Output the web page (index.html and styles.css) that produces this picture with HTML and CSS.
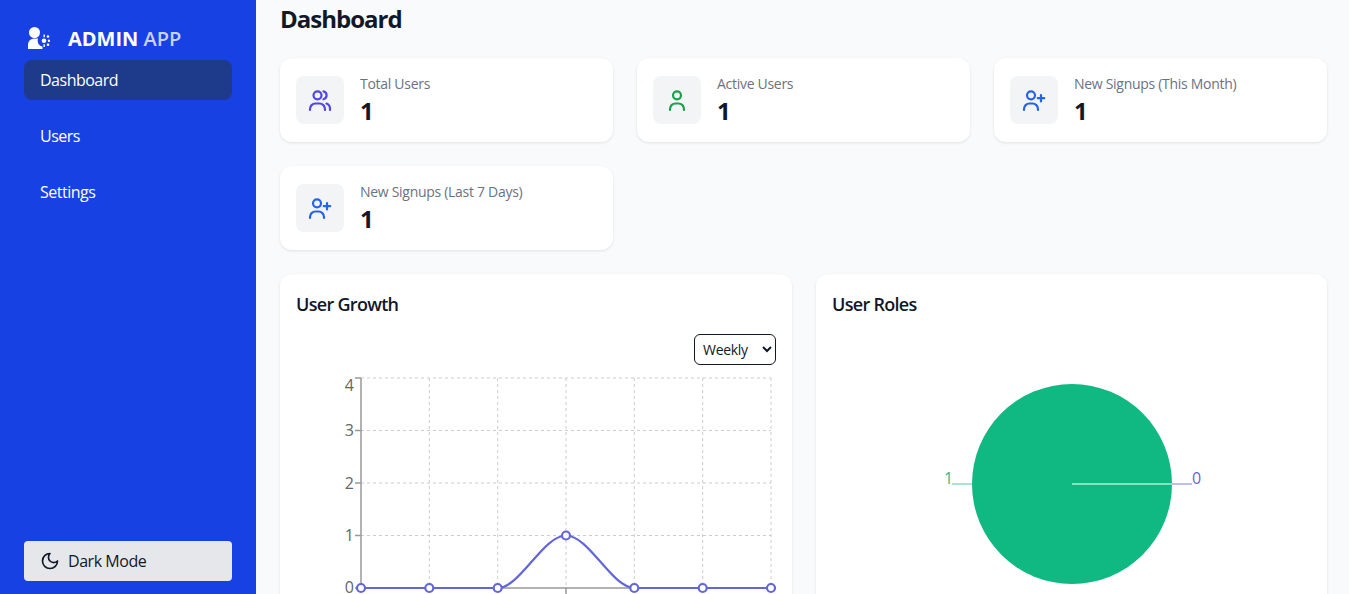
FILE: index.html
```html
<!DOCTYPE html>
<html lang="en">
<head>
  <meta charset="UTF-8">
  <title>Admin App</title>
  <link rel="stylesheet" href="styles.css">
</head>
<body>
  <div class="layout">
    <aside class="sidebar">
      <div>
        <div class="brand">
          <svg class="brand-icon" viewBox="0 0 22 22" fill="#fff">
            <circle cx="6.500" cy="5.500" r="5.500"/>
            <path d="M0 22v-4.500a6 6 0 0 1 6-6h4a6 6 0 0 0 .5 5.500 5 5 0 0 0 4 2.500v2.500z"/>
            <path d="M15.500 7.500h1.400v2.800h-1.400zM15.500 17.300h1.400v2.800h-1.400z"/>
            <circle cx="20" cy="9.500" r="1.300"/><circle cx="21" cy="13.700" r="1.200"/>
            <circle cx="20" cy="17.800" r="1.300"/><circle cx="16" cy="13.700" r="2.300"/>
          </svg>
          <span class="brand-name">ADMIN <span class="brand-light">APP</span></span>
        </div>
        <nav class="nav">
          <a class="nav-item active">Dashboard</a>
          <a class="nav-item">Users</a>
          <a class="nav-item">Settings</a>
        </nav>
      </div>
      <button class="mode-btn">
        <svg class="moon" viewBox="0 0 24 24" fill="none" stroke="#111827" stroke-width="2" stroke-linecap="round" stroke-linejoin="round"><path d="M12 3a6 6 0 0 0 9 9 9 9 0 1 1-9-9Z"/></svg>
        Dark Mode
      </button>
    </aside>

    <main class="main">
      <h1 class="page-title">Dashboard</h1>

      <section class="stats">
        <div class="stat-card">
          <div class="stat-icon">
            <svg viewBox="0 0 24 24" fill="none" stroke="#4f46e5" stroke-width="2.200" stroke-linecap="round" stroke-linejoin="round">
              <circle cx="9.500" cy="7.300" r="4"/>
              <path d="M2 22v-1a5.500 5.500 0 0 1 5.500-5.500h4a5.500 5.500 0 0 1 5.500 5.500v1"/>
              <path d="M15.500 3.400a4 4 0 0 1 0 7.800"/>
              <path d="M18.500 15.600a5.500 5.500 0 0 1 3.500 5.200v1.200"/>
            </svg>
          </div>
          <div>
            <div class="stat-label">Total Users</div>
            <div class="stat-value">1</div>
          </div>
        </div>
        <div class="stat-card">
          <div class="stat-icon">
            <svg viewBox="0 0 24 24" fill="none" stroke="#16a34a" stroke-width="2.200" stroke-linecap="round" stroke-linejoin="round">
              <circle cx="12" cy="7.300" r="4"/>
              <path d="M5 22v-1a5.500 5.500 0 0 1 5.500-5.500h3a5.500 5.500 0 0 1 5.500 5.500v1"/>
            </svg>
          </div>
          <div>
            <div class="stat-label">Active Users</div>
            <div class="stat-value">1</div>
          </div>
        </div>
        <div class="stat-card">
          <div class="stat-icon">
            <svg viewBox="0 0 24 24" fill="none" stroke="#2563eb" stroke-width="2.200" stroke-linecap="round" stroke-linejoin="round">
              <circle cx="9" cy="7.300" r="4"/>
              <path d="M2 22v-1a5.500 5.500 0 0 1 5.500-5.500h3a5.500 5.500 0 0 1 5.500 5.500v1"/>
              <path d="M19 7v6.500M15.800 10.200h6.400"/>
            </svg>
          </div>
          <div>
            <div class="stat-label">New Signups (This Month)</div>
            <div class="stat-value">1</div>
          </div>
        </div>
        <div class="stat-card">
          <div class="stat-icon">
            <svg viewBox="0 0 24 24" fill="none" stroke="#2563eb" stroke-width="2.200" stroke-linecap="round" stroke-linejoin="round">
              <circle cx="9" cy="7.300" r="4"/>
              <path d="M2 22v-1a5.500 5.500 0 0 1 5.500-5.500h3a5.500 5.500 0 0 1 5.500 5.500v1"/>
              <path d="M19 7v6.500M15.800 10.200h6.400"/>
            </svg>
          </div>
          <div>
            <div class="stat-label">New Signups (Last 7 Days)</div>
            <div class="stat-value">1</div>
          </div>
        </div>
      </section>

      <section class="charts">
        <div class="chart-card">
          <h2 class="chart-title">User Growth</h2>
          <div class="chart-controls">
            <select class="range-select">
              <option>Weekly</option>
              <option>Monthly</option>
            </select>
          </div>
          <svg class="chart" width="480" height="229" viewBox="0 0 480 229">
            <g class="grid">
              <path d="M65 13H475M65 65.500H475M65 118H475M65 170.500H475"/>
              <path d="M133.300 13V223M201.700 13V223M270 13V223M338.300 13V223M406.700 13V223M475 13V223"/>
            </g>
            <g class="axis">
              <path d="M65 13V223H475"/>
              <path d="M59 13H65M59 65.500H65M59 118H65M59 170.500H65M59 223H65M270 223V229"/>
            </g>
            <g class="tick-text">
              <text x="58" y="228" text-anchor="end">0</text>
              <text x="58" y="175.500" text-anchor="end">1</text>
              <text x="58" y="123.500" text-anchor="end">2</text>
              <text x="58" y="70.500" text-anchor="end">3</text>
              <text x="58" y="26" text-anchor="end">4</text>
            </g>
            <path class="line" d="M65 223H201.700C224 223 247 170.500 270 170.500C293 170.500 316 223 338.300 223H475"/>
            <g class="dots">
              <circle cx="65" cy="223" r="4"/>
              <circle cx="133.300" cy="223" r="4"/>
              <circle cx="201.700" cy="223" r="4"/>
              <circle cx="270" cy="170.500" r="4"/>
              <circle cx="338.300" cy="223" r="4"/>
              <circle cx="406.700" cy="223" r="4"/>
              <circle cx="475" cy="223" r="4"/>
            </g>
          </svg>
        </div>
        <div class="chart-card">
          <h2 class="chart-title">User Roles</h2>
          <svg class="chart pie-chart" width="479" height="229" viewBox="0 0 479 229">
            <circle cx="240" cy="119" r="100" fill="#10b981"/>
            <path d="M240 119H340" stroke="#a7f3d0" stroke-width="1.500"/>
            <path d="M120 119H140" stroke="#8fd9c0" stroke-width="1.500"/>
            <path d="M340 119H360" stroke="#a9a8e6" stroke-width="1.500"/>
            <text class="pie-label green" x="112" y="119">1</text>
            <text class="pie-label purple" x="360" y="119">0</text>
          </svg>
        </div>
      </section>
    </main>
  </div>
</body>
</html>
```

FILE: styles.css
```css
* {
  box-sizing: border-box;
}
html, body {
  height: 100%;
  margin: 0;
  overflow: hidden;
}
body {
  font-family: "Open Sans", "Noto Sans", sans-serif;
  background-color: #f9fafb;
  color: #111827;
}
.layout {
  display: flex;
  height: 100%;
}

/* sidebar */
.sidebar {
  width: 256px;
  flex-shrink: 0;
  display: flex;
  flex-direction: column;
  justify-content: space-between;
  padding: 23px 24px 13px;
  background-color: #1741e3;
  color: #fff;
}
.brand {
  display: flex;
  align-items: center;
  gap: 18px;
  height: 30px;
  margin: 0 0 7px 4px;
}
.brand-icon {
  width: 22px;
  height: 22px;
}
.brand-name {
  font-size: 20px;
  font-weight: 700;
}
.brand-light {
  color: #c7d2fe;
  font-weight: 600;
}
.nav {
  display: flex;
  flex-direction: column;
  gap: 16px;
}
.nav-item {
  display: block;
  height: 40px;
  padding: 0 16px;
  border-radius: 8px;
  font-size: 16px;
  letter-spacing: -0.5px;
  line-height: 40px;
}
.nav-item.active {
  background-color: #1e3a8a;
}
.mode-btn {
  display: flex;
  align-items: center;
  gap: 8px;
  width: 100%;
  height: 40px;
  padding: 0 16px;
  border: 0;
  border-radius: 4px;
  background-color: #e5e7eb;
  color: #111827;
  font-family: inherit;
  font-size: 16px;
  letter-spacing: -0.45px;
}
.moon {
  width: 20px;
  height: 20px;
}

/* main */
.main {
  flex: 1;
  min-width: 0;
  padding: 3px 22px 0 24px;
  overflow: hidden;
}
.page-title {
  margin: 0 0 23px;
  font-size: 24px;
  font-weight: 700;
  letter-spacing: -1px;
  line-height: 32px;
}
.stats {
  display: grid;
  grid-template-columns: repeat(3, 1fr);
  gap: 24px;
  margin-bottom: 24px;
}
.stat-card {
  display: flex;
  align-items: center;
  gap: 16px;
  height: 84px;
  padding: 0 16px;
  border-radius: 12px;
  background-color: #fff;
  box-shadow: 0 1px 3px rgba(0, 0, 0, 0.1);
}
.stat-icon {
  display: flex;
  align-items: center;
  justify-content: center;
  width: 48px;
  height: 48px;
  border-radius: 8px;
  background-color: #f3f4f6;
}
.stat-icon svg {
  width: 24px;
  height: 24px;
}
.stat-label {
  font-size: 14px;
  letter-spacing: -0.29px;
  line-height: 20px;
  color: #6b7280;
}
.stat-value {
  margin-top: 1px;
  font-size: 24px;
  font-weight: 700;
  line-height: 32px;
}
.charts {
  display: grid;
  grid-template-columns: 512px 1fr;
  gap: 24px;
}
.chart-card {
  height: 500px;
  padding: 16px;
  border-radius: 12px;
  background-color: #fff;
  box-shadow: 0 1px 3px rgba(0, 0, 0, 0.1);
}
.chart-title {
  margin: 0 0 16px;
  font-size: 18px;
  font-weight: 600;
  letter-spacing: -0.7px;
  line-height: 28px;
}
.chart-controls {
  display: flex;
  justify-content: flex-end;
}
.range-select {
  width: 82px;
  height: 31px;
  padding: 0 4px;
  border: 1px solid #111827;
  border-radius: 6px;
  background-color: #fff;
  color: #111827;
  font-family: inherit;
  font-size: 14px;
  letter-spacing: -0.3px;
}
.chart {
  display: block;
}
.pie-chart {
  margin-top: 47px;
}
.grid path {
  fill: none;
  stroke: #ccc;
  stroke-dasharray: 3 3;
}
.axis path {
  fill: none;
  stroke: #999;
  stroke-width: 1.500;
}
.tick-text text {
  fill: #666;
  font-size: 16px;
}
.line {
  fill: none;
  stroke: #6366d8;
  stroke-width: 2.200;
}
.dots circle {
  fill: #fff;
  stroke: #6366d8;
  stroke-width: 2.200;
}
.pie-label {
  font-size: 16px;
}
.pie-label.green {
  fill: #34b58c;
}
.pie-label.purple {
  fill: #6366d8;
}
```
